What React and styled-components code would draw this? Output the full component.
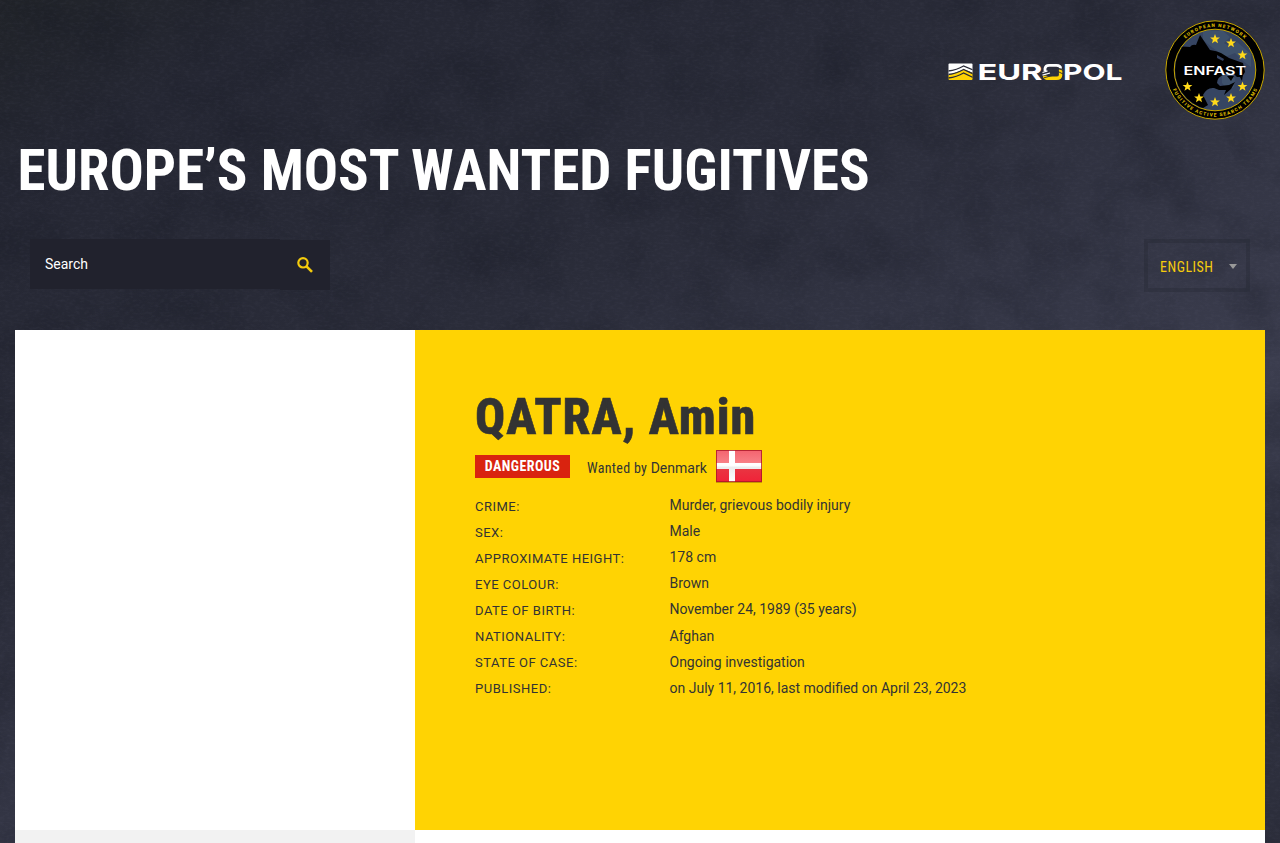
import React from "react";
import styled, { createGlobalStyle } from "styled-components";

const GlobalStyle = createGlobalStyle`
  * { box-sizing: border-box; }
  html, body { margin: 0; padding: 0; height: 100%; overflow: hidden; }
  body { background: #2a2c39; color: #333; font: 14px/20px Roboto, "Liberation Sans", sans-serif; }
`;

const Page = styled.div`
  position: relative;
  height: 843px;
  overflow: hidden;
  padding: 0 15px;
  display: flex;
  flex-direction: column;
  isolation: isolate;
  background: linear-gradient(152deg, #212429 0%, #252733 12%, #2a2c39 38%, #3b3d4e 68%, #2b2d3a 100%);
`;

const Grain = styled.svg`
  position: absolute;
  inset: 0;
  width: 100%;
  height: 100%;
  z-index: -1;
`;

const Header = styled.header`
  height: 330px;
  display: flex;
  flex-direction: column;
`;

const Logos = styled.div`
  display: flex;
  justify-content: flex-end;
  align-items: flex-start;
  height: 140px;
  padding-top: 20px;
`;

const EuropolSvg = styled.svg`
  width: 174px;
  height: 18px;
  margin: 43px 43px 0 0;
  display: block;
  overflow: visible;
`;

const EnfastSvg = styled.svg`
  width: 100px;
  height: 100px;
  display: block;
`;

const condensed = `
  font-family: "Roboto Condensed", Roboto, "Liberation Sans Narrow", sans-serif;
  font-stretch: 75%;
`;

const Title = styled.h1`
  ${condensed}
  margin: 0;
  padding: 1px 0 0 2.6px;
  height: 99px;
  font-size: 56.9px;
  font-weight: 700;
  line-height: 60px;
  color: #fff;
  white-space: nowrap;
`;

const Tools = styled.div`
  display: flex;
  justify-content: space-between;
  padding: 0 15px;
`;

const Search = styled.form`
  display: flex;
`;

const SearchField = styled.div`
  width: 250px;
  height: 50px;
  padding-left: 15px;
  background: #21222d;
  color: #fff;
  line-height: 50px;
`;

const SearchButton = styled.div`
  width: 50px;
  height: 50px;
  margin-top: 1px;
  background: #21222d;
  display: flex;
  align-items: center;
  justify-content: center;
`;

const Language = styled.div`
  ${condensed}
  width: 106px;
  height: 53px;
  border: 4px solid rgba(34, 36, 46, 0.3);
  display: flex;
  align-items: center;
  justify-content: space-between;
  padding: 3px 9px 0 12px;
  color: #f5cc0c;
  letter-spacing: 0.5px;
`;

const Caret = styled.i`
  border: 4px solid transparent;
  border-top: 5px solid #999;
  border-bottom: 0;
  margin-top: -1px;
`;

const Main = styled.main`
  display: grid;
  grid-template-columns: 400px 1fr;
  grid-template-rows: 500px 13px;
`;

const Cell = styled.div`
  background: ${(p) => p.$color};
`;

const Profile = styled.section`
  background: #ffd303;
  padding: 57px 60px 0;
`;

const Name = styled.h2`
  ${condensed}
  margin: 0;
  height: 60px;
  line-height: 60px;
  font-size: 50px;
  font-weight: 800;
  letter-spacing: 0.95px;
  -webkit-text-stroke: 0.6px #333;
  white-space: nowrap;
`;

const Status = styled.div`
  display: flex;
  height: 46px;
`;

const Danger = styled.strong`
  ${condensed}
  width: 95px;
  height: 23px;
  margin: 8px 17px 0 0;
  background: #d9230f;
  color: #fff;
  text-align: center;
  line-height: 23px;
  font-weight: 700;
  letter-spacing: 0.45px;
  white-space: nowrap;
`;

const Wanted = styled.span`
  ${condensed}
  width: 128px;
  margin-top: 11px;
  white-space: nowrap;
  letter-spacing: 0.3px;
`;

const Country = styled.span`
  font-family: Roboto, sans-serif;
  font-stretch: 100%;
  letter-spacing: 0;
`;

const Flag = styled.svg`
  width: 48px;
  height: 36px;
  margin-top: 2px;
`;

const Facts = styled.dl`
  margin: 0;
`;

const Fact = styled.div`
  display: flex;
  height: 26.1px;
`;

const Label = styled.dt`
  width: 194.5px;
  padding-top: 3.8px;
  font-size: 13px;
  letter-spacing: 0.5px;
  text-transform: uppercase;
`;

const Value = styled.dd`
  margin: 0;
  padding-top: 2.1px;
`;

const facts = [
  ["Crime:", "Murder, grievous bodily injury"],
  ["Sex:", "Male"],
  ["Approximate height:", "178 cm"],
  ["Eye colour:", "Brown"],
  ["Date of birth:", "November 24, 1989 (35 years)"],
  ["Nationality:", "Afghan"],
  ["State of case:", "Ongoing investigation"],
  ["Published:", "on July 11, 2016, last modified on April 23, 2023"],
];

const Texture = () => (
  <Grain aria-hidden="true">
    <filter id="stains" x="0" y="0" width="100%" height="100%" colorInterpolationFilters="sRGB">
      <feTurbulence type="fractalNoise" baseFrequency="0.016 0.018" numOctaves="7" seed="8" />
      <feColorMatrix values="0 0 0 0 0.08  0 0 0 0 0.09  0 0 0 0 0.13  1.9 0 0 0 -0.8" />
    </filter>
    <filter id="fibres" x="0" y="0" width="100%" height="100%" colorInterpolationFilters="sRGB">
      <feTurbulence type="fractalNoise" baseFrequency="0.2 0.4" numOctaves="3" seed="3" />
      <feColorMatrix values="0 0 0 0 0.5  0 0 0 0 0.5  0 0 0 0 0.6  0.6 0 0 0 -0.25" />
    </filter>
    <rect width="100%" height="100%" filter="url(#stains)" opacity="0.32" />
    <rect width="100%" height="100%" filter="url(#fibres)" opacity="0.25" />
  </Grain>
);

const Europol = () => (
  <EuropolSvg viewBox="0 0 174 18" role="img" aria-label="Europol">
    <defs>
      <clipPath id="badge"><rect x="0.5" y="0.5" width="24" height="16.5" rx="1" /></clipPath>
    </defs>
    <g clipPath="url(#badge)">
      <path d="M0 0H25V10L16 6.5L0 12.5Z" fill="#fff" />
      <path d="M0 12.5L16 6.5L25 10V18H0Z" fill="#ffd304" />
      <path d="M0 8Q9 7 15.5 3L25 7M0 11.5Q9 10.5 15.5 6.5L25 10.8M0 15Q9 14 15.5 10L25 14.5" fill="none" stroke="#292b38" strokeWidth="1.3" />
    </g>
    <g fontFamily="Inter, sans-serif" fontWeight="700" fontSize="22.2" fill="#fff">
      <text x="29.5" y="17" textLength="65" lengthAdjust="spacingAndGlyphs">EUR</text>
      <text x="115" y="17" textLength="59.5" lengthAdjust="spacingAndGlyphs">POL</text>
    </g>
    <path d="M97 8V5.5Q97.5 2.3 101 2.3H108.5Q112.6 2.3 112.6 5.5" fill="none" stroke="#fff" strokeWidth="2.8" />
    <path d="M96.5 12.8Q97 15.3 101 15.3H108.5Q112.6 15.3 112.6 12V6.5" fill="none" stroke="#ffd304" strokeWidth="3.4" />
    <path d="M94.5 9.5L99.5 7.8M94.5 12.2L102 10" stroke="#fff" strokeWidth="1.3" />
    <path d="M110 5L115 7.5M110 8.5L115 11M96 14.8L104 12.6" stroke="#292b38" strokeWidth="0.9" />
  </EuropolSvg>
);

const stars = [[50, 19], [66, 23], [77.5, 35], [77.5, 66.5], [66, 78], [50, 82], [34, 78], [22.5, 66.5]];

const Enfast = () => (
  <EnfastSvg viewBox="0 0 100 100" role="img" aria-label="Enfast">
    <defs>
      <path id="arcTop" d="M7 50A43 43 0 0 1 93 50" />
      <path id="arcBottom" d="M3.4 50A46.6 46.6 0 0 0 96.6 50" />
      <clipPath id="disc"><circle cx="50" cy="50" r="40" /></clipPath>
    </defs>
    <circle cx="50" cy="50" r="49.2" fill="#000" stroke="#c9a800" strokeWidth="1" />
    <circle cx="50" cy="50" r="40.8" fill="#364562" stroke="#c9a800" strokeWidth="1" />
    <g clipPath="url(#disc)">
      <path d="M38 10L58 11L65 17L59 23L66 27L72 22L86 34V47L78 41L70 33L60 37L48 28L38 20ZM57 54L70 58L69 67L63 70L57 63Z" fill="#496078" opacity=".45" />
      <path d="M8 26L25 27Q27 24 31 25L35 15L45 30Q52 31 56 33L64 38L78 43L80 52L77 57L72 57L69 54L60 54Q52 57 52 63L55 66L64 65L70 62L66 69L59 75L61 70L54 70L49 68Q42 67 38 75L43 85L30 93L5 78Z" fill="#000" />
      <path d="M52 35L59 39L58 41L52 38Z" fill="#33415f" />
      <path d="M62 56L66 61L69 56ZM74 55L77 61L78 54Z" fill="#000" />
    </g>
    <g fill="#ffd91a">
      {stars.map(([x, y]) => (
        <path key={`${x}-${y}`} transform={`translate(${x} ${y})`} d="M0-5L1.3-1.6L4.9-1.5L2.1.8L3 4.2L0 2.2L-3 4.2L-2.1.8L-4.9-1.5L-1.3-1.6Z" />
      ))}
    </g>
    <text x="18.5" y="54.8" fontFamily="Inter, sans-serif" fontSize="11.6" fontWeight="600" fill="#fff" textLength="62.5" lengthAdjust="spacingAndGlyphs">ENFAST</text>
    <g fill="#d3b000" fontFamily="Roboto, sans-serif" fontSize="4.8" fontWeight="900" textAnchor="middle">
      <text textLength="65"><textPath href="#arcTop" startOffset="50%">EUROPEAN NETWORK</textPath></text>
      <text textLength="106"><textPath href="#arcBottom" startOffset="50%">FUGITIVE ACTIVE SEARCH TEAMS</textPath></text>
    </g>
  </EnfastSvg>
);

const Denmark = () => (
  <Flag viewBox="0 0 48 36" role="img" aria-label="Denmark">
    <defs>
      <linearGradient id="flagRed" x2="0" y2="1">
        <stop offset="0" stopColor="#f4636f" />
        <stop offset=".5" stopColor="#f9878c" />
        <stop offset=".52" stopColor="#e83843" />
        <stop offset="1" stopColor="#f02238" />
      </linearGradient>
      <linearGradient id="flagWhite" x2="0" y2="1">
        <stop offset="0" stopColor="#fff" />
        <stop offset=".48" stopColor="#fff" />
        <stop offset=".55" stopColor="#ececec" />
        <stop offset="1" stopColor="#fff" />
      </linearGradient>
    </defs>
    <rect x="1" y="2" width="46" height="32" fill="#9b6b00" opacity=".55" />
    <rect x="1" y="1" width="46" height="32" fill="url(#flagRed)" />
    <path d="M14 1H20V14H47V20H20V33H14V20H1V14H14Z" fill="url(#flagWhite)" />
    <rect x="1.5" y="1.5" width="45" height="31" fill="none" stroke="#a91525" strokeOpacity=".8" />
  </Flag>
);

export default function App() {
  return (
    <>
      <GlobalStyle />
      <Page>
        <Texture />
        <Header>
          <Logos>
            <Europol />
            <Enfast />
          </Logos>
          <Title>EUROPE’S MOST WANTED FUGITIVES</Title>
          <Tools>
            <Search>
              <SearchField>Search</SearchField>
              <SearchButton>
                <svg width="16" height="16" viewBox="0 0 16 16" fill="none" stroke="#f5cc0c">
                  <circle cx="6" cy="5.8" r="4.7" strokeWidth="2.2" />
                  <path d="M9.5 9.3L15 14.8" strokeWidth="2.6" />
                </svg>
              </SearchButton>
            </Search>
            <Language>ENGLISH<Caret /></Language>
          </Tools>
        </Header>
        <Main>
          <Cell $color="#fff" />
          <Profile>
            <Name>QATRA, Amin</Name>
            <Status>
              <Danger>DANGEROUS</Danger>
              <Wanted>Wanted by <Country>Denmark</Country></Wanted>
              <Denmark />
            </Status>
            <Facts>
              {facts.map(([label, value]) => (
                <Fact key={label}>
                  <Label>{label}</Label>
                  <Value>{value}</Value>
                </Fact>
              ))}
            </Facts>
          </Profile>
          <Cell $color="#f2f2f2" />
          <Cell $color="#fff" />
        </Main>
      </Page>
    </>
  );
}
